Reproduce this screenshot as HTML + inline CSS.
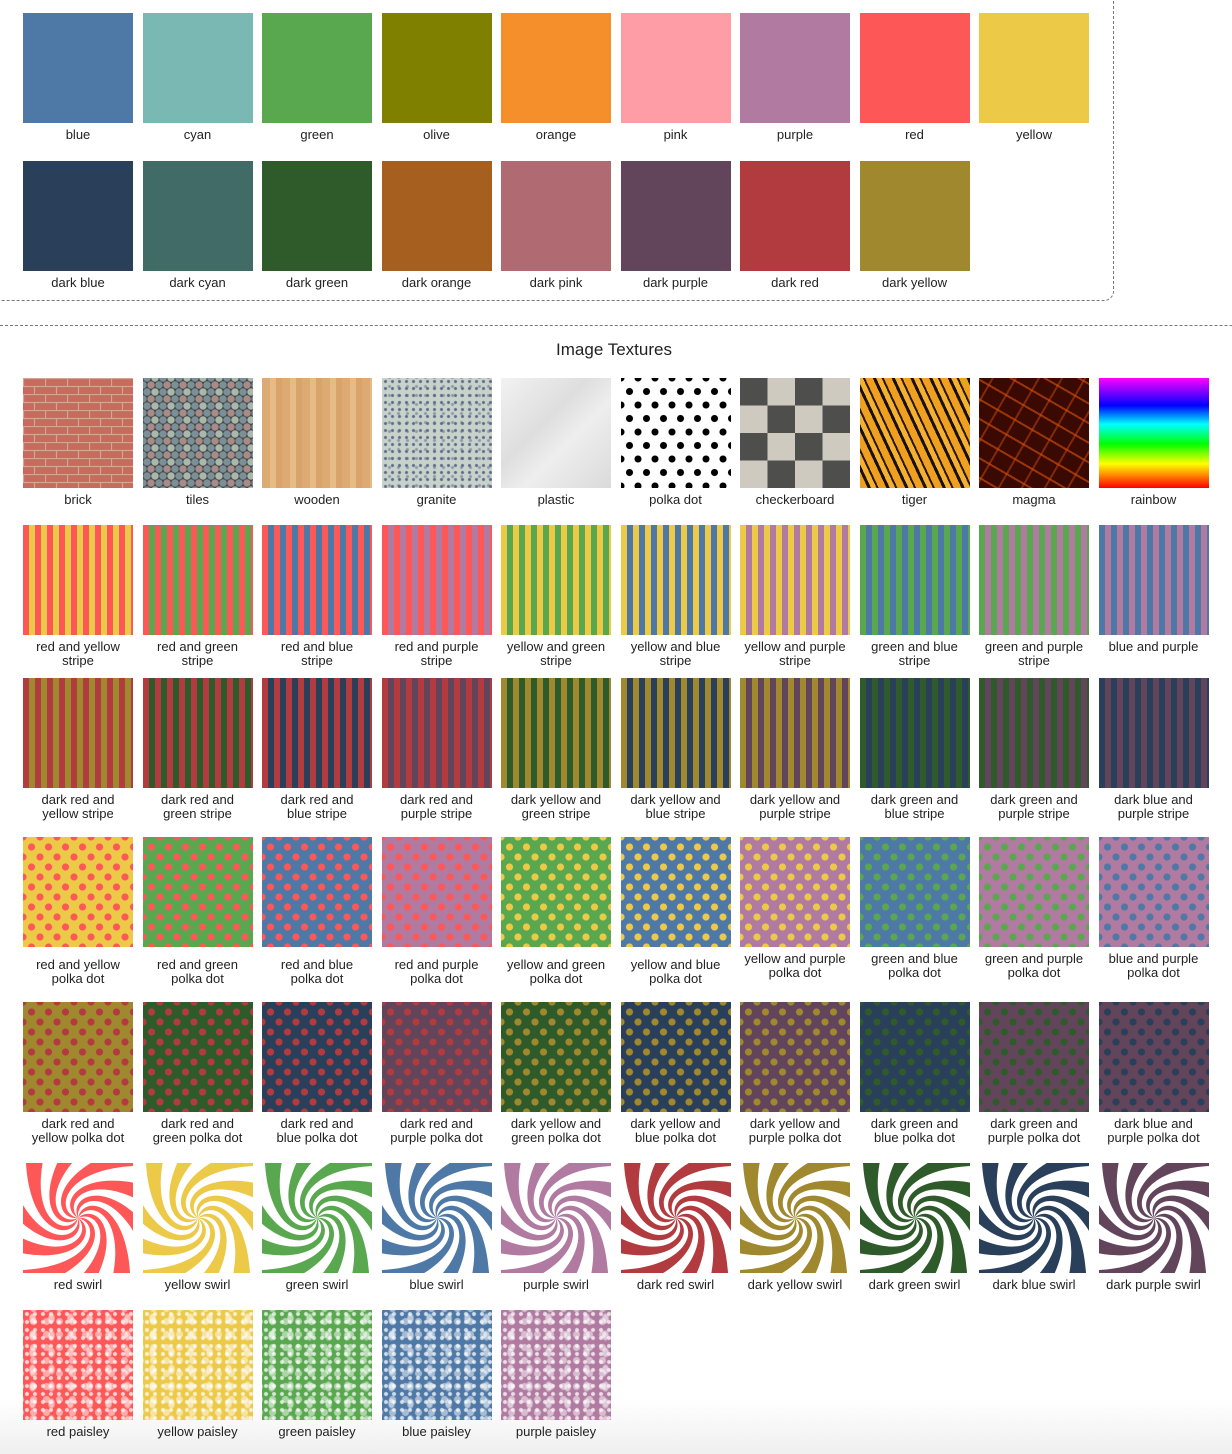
<!DOCTYPE html>
<html><head><meta charset="utf-8"><style>
*{margin:0;padding:0;box-sizing:border-box}
html,body{width:1232px;height:1454px;overflow:hidden}
body{background:linear-gradient(#fff 0,#fff 1400px,#efefef 1454px);font-family:"Liberation Sans",sans-serif;color:#222;position:relative}
.box1{position:absolute;left:-10px;top:-10px;width:1124px;height:311px;border:1px dashed #777;border-radius:0 0 10px 0}
.box2{position:absolute;left:-10px;top:325px;width:1252px;height:1200px;border:1px dashed #777;border-radius:0 12px 0 0}
.title{position:absolute;top:340px;left:0;width:1228px;text-align:center;font-size:17px}
.r{position:absolute;left:23px;display:flex}
.i{width:119.5px;flex:none}
.b{width:110px;height:110px;display:block}
.l{width:130px;margin-left:-10px;text-align:center;font-size:13px;line-height:14px;margin-top:5px}
.m11 .l{margin-top:11px}
.p{--a:red;--c:#fff;background:radial-gradient(circle,var(--a) 3.2px,transparent 3.9px) 0 0/17px 20px,radial-gradient(circle,var(--a) 3.2px,transparent 3.9px) 8.5px 10px/17px 20px,var(--c)}
.s{--a:red;--c:#fff;background:repeating-linear-gradient(90deg,var(--a) 0 6px,var(--c) 6px 12px)}
.pz{--a:red;background:radial-gradient(ellipse 4px 6px,rgba(255,255,255,.6) 60%,transparent 100%) 0 0/19px 17px,radial-gradient(circle,rgba(255,255,255,.75) 1.5px,transparent 2.5px) 0 0/8px 8px,radial-gradient(circle,rgba(255,255,255,.5) 3px,transparent 4px) 4px 5px/13px 13px,var(--a)}
</style></head><body>
<svg width="0" height="0" style="position:absolute">
<defs>
<path id="arm" d="M0 0C21.65 12.5 0 55 -79.9 29.1L-84.9 2.97C-17 52.3 16.7 18.6 0 0Z"/>
<g id="sw">
<use href="#arm"/><use href="#arm" transform="rotate(36)"/><use href="#arm" transform="rotate(72)"/><use href="#arm" transform="rotate(108)"/><use href="#arm" transform="rotate(144)"/><use href="#arm" transform="rotate(180)"/><use href="#arm" transform="rotate(216)"/><use href="#arm" transform="rotate(252)"/><use href="#arm" transform="rotate(288)"/><use href="#arm" transform="rotate(324)"/>
</g>
<pattern id="brick" width="22" height="16" patternUnits="userSpaceOnUse">
<rect width="22" height="16" fill="#c76b5c"/>
<path d="M0 0.5H22M0 8.5H22M0.5 0V8M11.5 8V16" stroke="#d4a596" stroke-width="1.2"/>
</pattern>
</defs>
</svg>
<div class="box1"></div>
<div class="box2"></div>

<div class="r" style="top:13px">
<div class="i"><div class="b" style="background:#4e79a7"></div><div class="l">blue</div></div>
<div class="i"><div class="b" style="background:#7ab8b3"></div><div class="l">cyan</div></div>
<div class="i"><div class="b" style="background:#59a84f"></div><div class="l">green</div></div>
<div class="i"><div class="b" style="background:#808000"></div><div class="l">olive</div></div>
<div class="i"><div class="b" style="background:#f58f2c"></div><div class="l">orange</div></div>
<div class="i"><div class="b" style="background:#ff9da7"></div><div class="l">pink</div></div>
<div class="i"><div class="b" style="background:#b07aa1"></div><div class="l">purple</div></div>
<div class="i"><div class="b" style="background:#fe5757"></div><div class="l">red</div></div>
<div class="i"><div class="b" style="background:#edc948"></div><div class="l">yellow</div></div>
</div>
<div class="r" style="top:161px">
<div class="i"><div class="b" style="background:#2a3f5a"></div><div class="l">dark blue</div></div>
<div class="i"><div class="b" style="background:#416b66"></div><div class="l">dark cyan</div></div>
<div class="i"><div class="b" style="background:#2f5b2a"></div><div class="l">dark green</div></div>
<div class="i"><div class="b" style="background:#a65f1f"></div><div class="l">dark orange</div></div>
<div class="i"><div class="b" style="background:#b06a72"></div><div class="l">dark pink</div></div>
<div class="i"><div class="b" style="background:#62445b"></div><div class="l">dark purple</div></div>
<div class="i"><div class="b" style="background:#b23b3f"></div><div class="l">dark red</div></div>
<div class="i"><div class="b" style="background:#a0882e"></div><div class="l">dark yellow</div></div>
</div>

<div class="title">Image Textures</div>

<div class="r" style="top:378px">
<div class="i"><svg class="b" viewBox="0 0 110 110"><rect width="110" height="110" fill="url(#brick)"/></svg><div class="l">brick</div></div>
<div class="i"><div class="b" style="background:radial-gradient(circle,#a88a86 3.3px,transparent 4px) 0 0/16px 14px,radial-gradient(circle,#7a9096 3.3px,transparent 4px) 8px 0/16px 14px,radial-gradient(circle,#a8b8aa 3.3px,transparent 4px) 4px 7px/16px 14px,radial-gradient(circle,#7a9096 3.3px,transparent 4px) 12px 7px/16px 14px,#45484a"></div><div class="l">tiles</div></div>
<div class="i"><div class="b" style="background:repeating-linear-gradient(90deg,#dcaa72 0 8px,#e6bb86 8px 14px,#d8a46c 14px 20px)"></div><div class="l">wooden</div></div>
<div class="i"><div class="b" style="background:radial-gradient(circle,#5a6a88 1px,transparent 2px) 0 0/7px 7px,radial-gradient(circle,#8e9aa8 1px,transparent 2px) 3px 4px/9px 9px,#c8d2ca"></div><div class="l">granite</div></div>
<div class="i"><div class="b" style="background:linear-gradient(135deg,#f2f2f2,#dedede 40%,#eee 60%,#dadada)"></div><div class="l">plastic</div></div>
<div class="i"><div class="b" style="background:radial-gradient(circle,#000 3.2px,transparent 3.8px) 0 0/17px 27px,radial-gradient(circle,#000 3.2px,transparent 3.8px) 8.5px 13.5px/17px 27px,#fff"></div><div class="l">polka dot</div></div>
<div class="i"><div class="b" style="background:repeating-conic-gradient(#cfcac0 0 25%,#4e4e4c 0 50%) 0 0/55px 55px"></div><div class="l">checkerboard</div></div>
<div class="i"><div class="b" style="background:repeating-linear-gradient(65deg,#f0a020 0 7px,#1a1000 7px 10px,#f4b030 10px 15px,#2a1800 15px 17px)"></div><div class="l">tiger</div></div>
<div class="i"><div class="b" style="background:repeating-linear-gradient(30deg,transparent 0 8px,rgba(220,80,10,.6) 8px 10px,transparent 10px 17px),repeating-linear-gradient(120deg,transparent 0 11px,rgba(200,70,10,.5) 11px 13px,transparent 13px 20px),#3a0a02"></div><div class="l">magma</div></div>
<div class="i"><div class="b" style="background:linear-gradient(#ff00ff,#0000ff 25%,#00ffff 42%,#00ff00 60%,#ffff00 78%,#ff0000)"></div><div class="l">rainbow</div></div>
</div>

<div class="r" style="top:525px">
<div class="i"><div class="b s" style="--a:#fe5757;--c:#edc948"></div><div class="l">red and yellow<br>stripe</div></div>
<div class="i"><div class="b s" style="--a:#fe5757;--c:#59a84f"></div><div class="l">red and green<br>stripe</div></div>
<div class="i"><div class="b s" style="--a:#fe5757;--c:#4e79a7"></div><div class="l">red and blue<br>stripe</div></div>
<div class="i"><div class="b s" style="--a:#fe5757;--c:#b07aa1"></div><div class="l">red and purple<br>stripe</div></div>
<div class="i"><div class="b s" style="--a:#edc948;--c:#59a84f"></div><div class="l">yellow and green<br>stripe</div></div>
<div class="i"><div class="b s" style="--a:#edc948;--c:#4e79a7"></div><div class="l">yellow and blue<br>stripe</div></div>
<div class="i"><div class="b s" style="--a:#edc948;--c:#b07aa1"></div><div class="l">yellow and purple<br>stripe</div></div>
<div class="i"><div class="b s" style="--a:#59a84f;--c:#4e79a7"></div><div class="l">green and blue<br>stripe</div></div>
<div class="i"><div class="b s" style="--a:#59a84f;--c:#b07aa1"></div><div class="l">green and purple<br>stripe</div></div>
<div class="i"><div class="b s" style="--a:#4e79a7;--c:#b07aa1"></div><div class="l">blue and purple</div></div>
</div>

<div class="r" style="top:678px">
<div class="i"><div class="b s" style="--a:#b23b3f;--c:#a0882e"></div><div class="l">dark red and<br>yellow stripe</div></div>
<div class="i"><div class="b s" style="--a:#b23b3f;--c:#2f5b2a"></div><div class="l">dark red and<br>green stripe</div></div>
<div class="i"><div class="b s" style="--a:#b23b3f;--c:#2a3f5a"></div><div class="l">dark red and<br>blue stripe</div></div>
<div class="i"><div class="b s" style="--a:#b23b3f;--c:#62445b"></div><div class="l">dark red and<br>purple stripe</div></div>
<div class="i"><div class="b s" style="--a:#a0882e;--c:#2f5b2a"></div><div class="l">dark yellow and<br>green stripe</div></div>
<div class="i"><div class="b s" style="--a:#a0882e;--c:#2a3f5a"></div><div class="l">dark yellow and<br>blue stripe</div></div>
<div class="i"><div class="b s" style="--a:#a0882e;--c:#62445b"></div><div class="l">dark yellow and<br>purple stripe</div></div>
<div class="i"><div class="b s" style="--a:#2f5b2a;--c:#2a3f5a"></div><div class="l">dark green and<br>blue stripe</div></div>
<div class="i"><div class="b s" style="--a:#2f5b2a;--c:#62445b"></div><div class="l">dark green and<br>purple stripe</div></div>
<div class="i"><div class="b s" style="--a:#2a3f5a;--c:#62445b"></div><div class="l">dark blue and<br>purple stripe</div></div>
</div>

<div class="r m11" style="top:837px">
<div class="i"><div class="b p" style="--a:#fe5757;--c:#edc948"></div><div class="l">red and yellow<br>polka dot</div></div>
<div class="i"><div class="b p" style="--a:#fe5757;--c:#59a84f"></div><div class="l">red and green<br>polka dot</div></div>
<div class="i"><div class="b p" style="--a:#fe5757;--c:#4e79a7"></div><div class="l">red and blue<br>polka dot</div></div>
<div class="i"><div class="b p" style="--a:#fe5757;--c:#b07aa1"></div><div class="l">red and purple<br>polka dot</div></div>
<div class="i"><div class="b p" style="--a:#edc948;--c:#59a84f"></div><div class="l">yellow and green<br>polka dot</div></div>
<div class="i"><div class="b p" style="--a:#edc948;--c:#4e79a7"></div><div class="l">yellow and blue<br>polka dot</div></div>
<div class="i"><div class="b p" style="--a:#edc948;--c:#b07aa1"></div><div class="l" style="margin-top:5px">yellow and purple<br>polka dot</div></div>
<div class="i"><div class="b p" style="--a:#59a84f;--c:#4e79a7"></div><div class="l" style="margin-top:5px">green and blue<br>polka dot</div></div>
<div class="i"><div class="b p" style="--a:#59a84f;--c:#b07aa1"></div><div class="l" style="margin-top:5px">green and purple<br>polka dot</div></div>
<div class="i"><div class="b p" style="--a:#4e79a7;--c:#b07aa1"></div><div class="l" style="margin-top:5px">blue and purple<br>polka dot</div></div>
</div>

<div class="r" style="top:1002px">
<div class="i"><div class="b p" style="--a:#b23b3f;--c:#a0882e"></div><div class="l">dark red and<br>yellow polka dot</div></div>
<div class="i"><div class="b p" style="--a:#b23b3f;--c:#2f5b2a"></div><div class="l">dark red and<br>green polka dot</div></div>
<div class="i"><div class="b p" style="--a:#b23b3f;--c:#2a3f5a"></div><div class="l">dark red and<br>blue polka dot</div></div>
<div class="i"><div class="b p" style="--a:#b23b3f;--c:#62445b"></div><div class="l">dark red and<br>purple polka dot</div></div>
<div class="i"><div class="b p" style="--a:#a0882e;--c:#2f5b2a"></div><div class="l">dark yellow and<br>green polka dot</div></div>
<div class="i"><div class="b p" style="--a:#a0882e;--c:#2a3f5a"></div><div class="l">dark yellow and<br>blue polka dot</div></div>
<div class="i"><div class="b p" style="--a:#a0882e;--c:#62445b"></div><div class="l">dark yellow and<br>purple polka dot</div></div>
<div class="i"><div class="b p" style="--a:#2f5b2a;--c:#2a3f5a"></div><div class="l">dark green and<br>blue polka dot</div></div>
<div class="i"><div class="b p" style="--a:#2f5b2a;--c:#62445b"></div><div class="l">dark green and<br>purple polka dot</div></div>
<div class="i"><div class="b p" style="--a:#2a3f5a;--c:#62445b"></div><div class="l">dark blue and<br>purple polka dot</div></div>
</div>

<div class="r" style="top:1163px">
<div class="i"><svg class="b" viewBox="-55 -55 110 110"><rect x="-55" y="-55" width="110" height="110" fill="#fff"/><use href="#sw" fill="#fe5757"/></svg><div class="l">red swirl</div></div>
<div class="i"><svg class="b" viewBox="-55 -55 110 110"><rect x="-55" y="-55" width="110" height="110" fill="#fff"/><use href="#sw" fill="#edc948"/></svg><div class="l">yellow swirl</div></div>
<div class="i"><svg class="b" viewBox="-55 -55 110 110"><rect x="-55" y="-55" width="110" height="110" fill="#fff"/><use href="#sw" fill="#59a84f"/></svg><div class="l">green swirl</div></div>
<div class="i"><svg class="b" viewBox="-55 -55 110 110"><rect x="-55" y="-55" width="110" height="110" fill="#fff"/><use href="#sw" fill="#4e79a7"/></svg><div class="l">blue swirl</div></div>
<div class="i"><svg class="b" viewBox="-55 -55 110 110"><rect x="-55" y="-55" width="110" height="110" fill="#fff"/><use href="#sw" fill="#b07aa1"/></svg><div class="l">purple swirl</div></div>
<div class="i"><svg class="b" viewBox="-55 -55 110 110"><rect x="-55" y="-55" width="110" height="110" fill="#fff"/><use href="#sw" fill="#b23b3f"/></svg><div class="l">dark red swirl</div></div>
<div class="i"><svg class="b" viewBox="-55 -55 110 110"><rect x="-55" y="-55" width="110" height="110" fill="#fff"/><use href="#sw" fill="#a0882e"/></svg><div class="l">dark yellow swirl</div></div>
<div class="i"><svg class="b" viewBox="-55 -55 110 110"><rect x="-55" y="-55" width="110" height="110" fill="#fff"/><use href="#sw" fill="#2f5b2a"/></svg><div class="l">dark green swirl</div></div>
<div class="i"><svg class="b" viewBox="-55 -55 110 110"><rect x="-55" y="-55" width="110" height="110" fill="#fff"/><use href="#sw" fill="#2a3f5a"/></svg><div class="l">dark blue swirl</div></div>
<div class="i"><svg class="b" viewBox="-55 -55 110 110"><rect x="-55" y="-55" width="110" height="110" fill="#fff"/><use href="#sw" fill="#62445b"/></svg><div class="l">dark purple swirl</div></div>
</div>

<div class="r" style="top:1310px">
<div class="i"><div class="b pz" style="--a:#fe5757"></div><div class="l">red paisley</div></div>
<div class="i"><div class="b pz" style="--a:#edc948"></div><div class="l">yellow paisley</div></div>
<div class="i"><div class="b pz" style="--a:#59a84f"></div><div class="l">green paisley</div></div>
<div class="i"><div class="b pz" style="--a:#4e79a7"></div><div class="l">blue paisley</div></div>
<div class="i"><div class="b pz" style="--a:#b07aa1"></div><div class="l">purple paisley</div></div>
</div>
</body></html>
